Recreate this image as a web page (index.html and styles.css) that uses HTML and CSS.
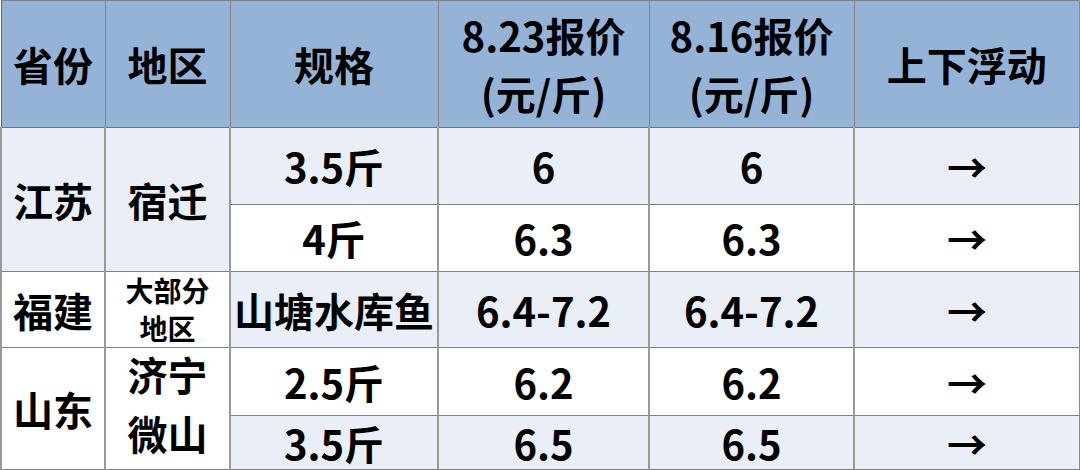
FILE: index.html
```html
<!DOCTYPE html>
<html lang="zh-CN">
<head>
<meta charset="utf-8">
<link rel="stylesheet" href="styles.css">
</head>
<body>
<table class="price">
  <colgroup>
    <col class="c1"><col class="c2"><col class="c3"><col class="c4"><col class="c5"><col class="c6">
  </colgroup>
  <thead>
    <tr class="head">
      <th>省份</th>
      <th>地区</th>
      <th>规格</th>
      <th>8.23报价<br>(元/斤)</th>
      <th>8.16报价<br>(元/斤)</th>
      <th>上下浮动</th>
    </tr>
  </thead>
  <tbody>
    <tr class="r1 shade">
      <td rowspan="2">江苏</td>
      <td rowspan="2">宿迁</td>
      <td>3.5斤</td>
      <td>6</td>
      <td>6</td>
      <td class="arrow">→</td>
    </tr>
    <tr class="r2">
      <td>4斤</td>
      <td>6.3</td>
      <td>6.3</td>
      <td class="arrow">→</td>
    </tr>
    <tr class="r3">
      <td class="plain">福建</td>
      <td class="plain small"><div class="squeeze">大部分<br>地区</div></td>
      <td class="shade">山塘水库鱼</td>
      <td class="shade">6.4-7.2</td>
      <td class="shade">6.4-7.2</td>
      <td class="shade arrow">→</td>
    </tr>
    <tr class="r4">
      <td rowspan="2">山东</td>
      <td rowspan="2" class="tall"><div class="squeeze2">济宁<br>微山</div></td>
      <td>2.5斤</td>
      <td>6.2</td>
      <td>6.2</td>
      <td class="arrow">→</td>
    </tr>
    <tr class="r5 shade">
      <td>3.5斤</td>
      <td>6.5</td>
      <td>6.5</td>
      <td class="arrow">→</td>
    </tr>
  </tbody>
</table>
</body>
</html>
```

FILE: styles.css
```css
html, body {
  margin: 0;
  padding: 0;
  background: #ffffff;
  overflow: hidden;
}

body {
  width: 1080px;
  height: 470px;
  font-family: "Noto Sans CJK SC", "Noto Sans", sans-serif;
  font-weight: 700;
  color: #000;
}

.price {
  border-collapse: collapse;
  table-layout: fixed;
  width: 1079px;
  border-top: 1px solid #3c4a5c;
  border-left: 1px solid #4c5a6c;
  border-right: 2px solid #8a8a8a;
}

.c1 { width: 104px; }
.c2 { width: 125px; }
.c3 { width: 208px; }
.c4 { width: 211px; }
.c5 { width: 205px; }
.c6 { width: 226px; }

th, td {
  padding: 0;
  text-align: center;
  vertical-align: middle;
  font-size: 40px;
  line-height: 1.1;
  border: 1px solid #808080;
  border-left: 2px solid #9a9a9a;
  white-space: nowrap;
  overflow: visible;
}

th {
  background: #95b3d7;
  border-left: 1px solid #5a6778;
  border-bottom: 1px solid #6a7585;
  line-height: 58px;
  padding-top: 0;
}

.head { height: 127px; }
.r1 { height: 77px; }
.r2 { height: 67px; }
.r3 { height: 76px; }
.r4 { height: 68px; }
.r5 { height: 54px; }

.shade, .shade td { background: #eaeff7; }
.r2 td, .r4 td, td.plain { background: #ffffff; }
.r1 td[rowspan] { background: #eaeff7; }

.small {
  font-size: 28px;
}

.squeeze {
  height: 60px;
  display: flex;
  flex-direction: column;
  justify-content: center;
  line-height: 38px;
  margin-top: -2px;
}

.squeeze2 {
  height: 100px;
  display: flex;
  flex-direction: column;
  justify-content: center;
  line-height: 59px;
  margin-top: -10px;
}

.arrow {
  font-family: "Noto Sans CJK SC", sans-serif;
  font-weight: 700;
  font-size: 40px;
}
```
